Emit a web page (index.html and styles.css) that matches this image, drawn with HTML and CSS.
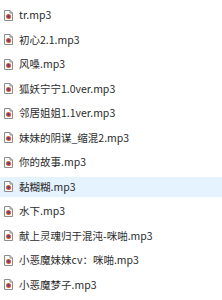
FILE: index.html
```html
<!DOCTYPE html>
<html>
<head>
<meta charset="utf-8">
<link rel="stylesheet" href="styles.css">
</head>
<body>
<ul class="files">
  <li class="file"><svg class="ico" viewBox="0 0 9 11"><path d="M0.5 0.5H6L8.5 3V10.5H0.5Z" fill="#fff" stroke="#8c8c8c"/><path d="M6 0.5V3H8.5" fill="none" stroke="#8c8c8c"/><circle cx="4.5" cy="6.5" r="2" fill="#5a3d8f" stroke="#e0622a" stroke-width="1.2"/></svg><span class="name">tr.mp3</span></li>
  <li class="file"><svg class="ico" viewBox="0 0 9 11"><path d="M0.5 0.5H6L8.5 3V10.5H0.5Z" fill="#fff" stroke="#8c8c8c"/><path d="M6 0.5V3H8.5" fill="none" stroke="#8c8c8c"/><circle cx="4.5" cy="6.5" r="2" fill="#5a3d8f" stroke="#e0622a" stroke-width="1.2"/></svg><span class="name">初心2.1.mp3</span></li>
  <li class="file"><svg class="ico" viewBox="0 0 9 11"><path d="M0.5 0.5H6L8.5 3V10.5H0.5Z" fill="#fff" stroke="#8c8c8c"/><path d="M6 0.5V3H8.5" fill="none" stroke="#8c8c8c"/><circle cx="4.5" cy="6.5" r="2" fill="#5a3d8f" stroke="#e0622a" stroke-width="1.2"/></svg><span class="name">风嗓.mp3</span></li>
  <li class="file"><svg class="ico" viewBox="0 0 9 11"><path d="M0.5 0.5H6L8.5 3V10.5H0.5Z" fill="#fff" stroke="#8c8c8c"/><path d="M6 0.5V3H8.5" fill="none" stroke="#8c8c8c"/><circle cx="4.5" cy="6.5" r="2" fill="#5a3d8f" stroke="#e0622a" stroke-width="1.2"/></svg><span class="name">狐妖宁宁1.0ver.mp3</span></li>
  <li class="file"><svg class="ico" viewBox="0 0 9 11"><path d="M0.5 0.5H6L8.5 3V10.5H0.5Z" fill="#fff" stroke="#8c8c8c"/><path d="M6 0.5V3H8.5" fill="none" stroke="#8c8c8c"/><circle cx="4.5" cy="6.5" r="2" fill="#5a3d8f" stroke="#e0622a" stroke-width="1.2"/></svg><span class="name">邻居姐姐1.1ver.mp3</span></li>
  <li class="file"><svg class="ico" viewBox="0 0 9 11"><path d="M0.5 0.5H6L8.5 3V10.5H0.5Z" fill="#fff" stroke="#8c8c8c"/><path d="M6 0.5V3H8.5" fill="none" stroke="#8c8c8c"/><circle cx="4.5" cy="6.5" r="2" fill="#5a3d8f" stroke="#e0622a" stroke-width="1.2"/></svg><span class="name">妹妹的阴谋_缩混2.mp3</span></li>
  <li class="file"><svg class="ico" viewBox="0 0 9 11"><path d="M0.5 0.5H6L8.5 3V10.5H0.5Z" fill="#fff" stroke="#8c8c8c"/><path d="M6 0.5V3H8.5" fill="none" stroke="#8c8c8c"/><circle cx="4.5" cy="6.5" r="2" fill="#5a3d8f" stroke="#e0622a" stroke-width="1.2"/></svg><span class="name">你的故事.mp3</span></li>
  <li class="file hover"><svg class="ico" viewBox="0 0 9 11"><path d="M0.5 0.5H6L8.5 3V10.5H0.5Z" fill="#fff" stroke="#8c8c8c"/><path d="M6 0.5V3H8.5" fill="none" stroke="#8c8c8c"/><circle cx="4.5" cy="6.5" r="2" fill="#5a3d8f" stroke="#e0622a" stroke-width="1.2"/></svg><span class="name">黏糊糊.mp3</span></li>
  <li class="file"><svg class="ico" viewBox="0 0 9 11"><path d="M0.5 0.5H6L8.5 3V10.5H0.5Z" fill="#fff" stroke="#8c8c8c"/><path d="M6 0.5V3H8.5" fill="none" stroke="#8c8c8c"/><circle cx="4.5" cy="6.5" r="2" fill="#5a3d8f" stroke="#e0622a" stroke-width="1.2"/></svg><span class="name">水下.mp3</span></li>
  <li class="file"><svg class="ico" viewBox="0 0 9 11"><path d="M0.5 0.5H6L8.5 3V10.5H0.5Z" fill="#fff" stroke="#8c8c8c"/><path d="M6 0.5V3H8.5" fill="none" stroke="#8c8c8c"/><circle cx="4.5" cy="6.5" r="2" fill="#5a3d8f" stroke="#e0622a" stroke-width="1.2"/></svg><span class="name">献上灵魂归于混沌-咪啪.mp3</span></li>
  <li class="file"><svg class="ico" viewBox="0 0 9 11"><path d="M0.5 0.5H6L8.5 3V10.5H0.5Z" fill="#fff" stroke="#8c8c8c"/><path d="M6 0.5V3H8.5" fill="none" stroke="#8c8c8c"/><circle cx="4.5" cy="6.5" r="2" fill="#5a3d8f" stroke="#e0622a" stroke-width="1.2"/></svg><span class="name">小恶魔妹妹cv：咪啪.mp3</span></li>
  <li class="file"><svg class="ico" viewBox="0 0 9 11"><path d="M0.5 0.5H6L8.5 3V10.5H0.5Z" fill="#fff" stroke="#8c8c8c"/><path d="M6 0.5V3H8.5" fill="none" stroke="#8c8c8c"/><circle cx="4.5" cy="6.5" r="2" fill="#5a3d8f" stroke="#e0622a" stroke-width="1.2"/></svg><span class="name">小恶魔梦子.mp3</span></li>
</ul>
</body>
</html>
```
FILE: styles.css
```css
html, body {
  margin: 0;
  padding: 0;
  background: #fff;
}
.files {
  list-style: none;
  margin: 0;
  padding: 5px 0 0 0;
  display: flex;
  flex-direction: column;
  gap: 4.5px;
}
.file {
  height: 20px;
  display: flex;
  align-items: center;
  padding-left: 4px;
  font-family: "Noto Sans CJK SC", "Noto Sans", sans-serif;
  font-size: 10.5px;
  color: #2b2b2b;
  white-space: nowrap;
}
.file.hover {
  background: #e5f3ff;
}
.ico {
  width: 9px;
  height: 11px;
  flex: none;
  margin-right: 6px;
}
.name {
  line-height: 20px;
}
```
